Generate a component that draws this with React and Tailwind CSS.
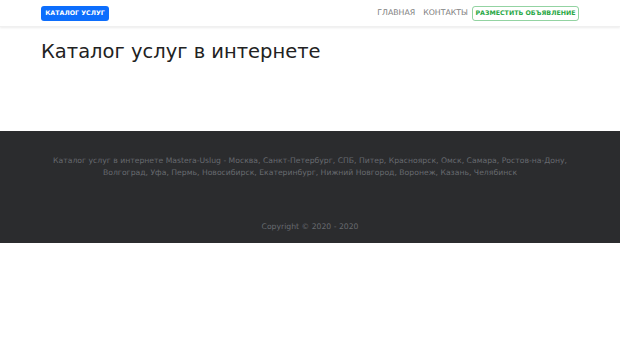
export default function App() {
  const font = { fontFamily: '"DejaVu Sans", sans-serif' };
  return (
    <div className="bg-white min-h-[343px]" style={font}>
      <nav className="h-[27px] flex items-center justify-between px-[41px] shadow-[0_1px_2px_rgba(0,0,0,0.08)] border-b border-[#f0f0f0]">
        <a className="bg-[#0d6efd] text-white text-[6.3px] font-semibold rounded-[3px] h-[15px] w-[68px] flex items-center justify-center">КАТАЛОГ УСЛУГ</a>
        <div className="flex items-center">
          <span className="text-[7.8px] text-[#808080] mr-[8px]">ГЛАВНАЯ</span>
          <span className="text-[7.8px] text-[#808080] mr-[4px]">КОНТАКТЫ</span>
          <a className="border border-[#28a745]/50 text-[#28a745] text-[6.3px] font-semibold rounded-[3px] h-[15px] w-[107px] flex items-center justify-center">РАЗМЕСТИТЬ ОБЪЯВЛЕНИЕ</a>
        </div>
      </nav>
      <div className="px-[41px] pt-[11px] h-[104px]">
        <h1 className="text-[19.5px] text-[#222] leading-[28px]">Каталог услуг в интернете</h1>
      </div>
      <footer className="bg-[#2b2c2e] h-[112px] flex flex-col items-center pt-[24px]">
        <p className="text-[7.7px] text-[#676a6f] text-center leading-[12px] w-[530px]">
          Каталог услуг в интернете Mastera-Uslug - Москва, Санкт-Петербург, СПБ, Питер, Красноярск, Омск, Самара, Ростов-на-Дону, Волгоград, Уфа, Пермь, Новосибирск, Екатеринбург, Нижний Новгород, Воронеж, Казань, Челябинск
        </p>
        <p className="text-[7.7px] text-[#676a6f] mt-[42px]">Copyright © 2020 - 2020</p>
      </footer>
    </div>
  );
}
